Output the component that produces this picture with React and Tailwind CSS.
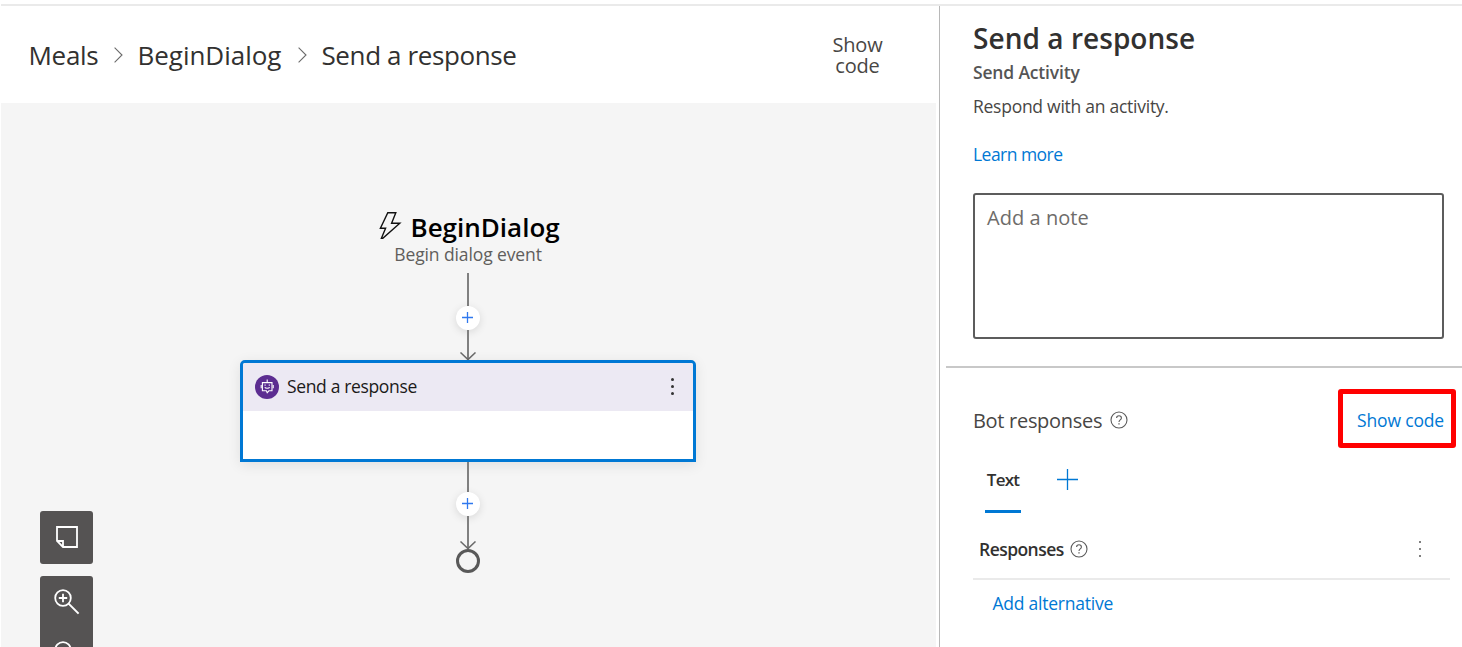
import React from "react";

function Chevron() {
  return (
    <svg width="9" height="16" viewBox="0 0 9 16" fill="none" stroke="#6b6b6b" strokeWidth="1.1" className="shrink-0">
      <path d="M0.6 0.6 8 8 0.6 15.4" />
    </svg>
  );
}

function HelpIcon() {
  return (
    <svg width="18" height="18" viewBox="0 0 18 18" fill="none" stroke="#5a5a5a" strokeWidth="1.1" className="shrink-0">
      <circle cx="9" cy="9" r="8" />
      <path d="M6.6 7.1C6.6 5.6 7.6 4.8 9 4.8c1.4 0 2.4.8 2.4 2.1 0 1.9-2.4 2-2.4 4" />
      <path d="M9 12.3v1.3" strokeWidth="1.3" />
    </svg>
  );
}

function Bolt() {
  return (
    <svg width="24" height="30" viewBox="0 0 24 30" fill="none" stroke="#111" strokeWidth="1.4" className="shrink-0">
      <path d="M9.8 0.7H17.8L13.6 11.2H21.8L4.8 26.3H3.4L7.6 16.2H2.4Z" />
    </svg>
  );
}

function PlusNode() {
  return (
    <div className="flex size-6 shrink-0 items-center justify-center rounded-full bg-white shadow-[0_2px_8px_rgba(0,0,0,0.12)]">
      <svg width="12" height="12" viewBox="0 0 12 12" fill="none" stroke="#2f78ee" strokeWidth="1.3">
        <path d="M0 5.5H11M5.5 0V11" />
      </svg>
    </div>
  );
}

function ArrowHead() {
  return (
    <svg width="18" height="8" viewBox="0 0 18 8" fill="none" stroke="#6a6a6a" strokeWidth="1.5" className="-mt-2 shrink-0">
      <path d="M1.5 0.5 9 7.6 16.5 0.5" />
    </svg>
  );
}

function BotIcon() {
  return (
    <div className="flex size-6 shrink-0 items-center justify-center rounded-full bg-[#5c2d91]">
      <svg width="16" height="18" viewBox="0 0 16 18" fill="none" stroke="#fff" strokeWidth="1.1">
        <path d="M8.2 1.6V4.6" />
        <path d="M3.4 4.6H13V12.8H9.9L8.2 14.8 7.4 12.8H3.4Z" />
        <path d="M2.2 7V10.2M14.2 7V10.2" />
        <path d="M5.8 9.2c.6 1.4 4.2 1.4 4.8 0" />
        <path d="M6.1 6.6v1.2M10.3 6.6v1.2" />
      </svg>
    </div>
  );
}

function Dots({ size, gap, color }) {
  return (
    <div className={"flex flex-col " + gap}>
      {[0, 1, 2].map((i) => (
        <span key={i} className={"rounded-full " + size + " " + color} />
      ))}
    </div>
  );
}

function Magnifier({ plus }) {
  return (
    <svg width="26" height="26" viewBox="0 0 26 26" fill="none" stroke="#fff" strokeWidth="1.8" className="shrink-0">
      <circle cx="9" cy="9" r="7.8" />
      <path d="M14.6 14.6 24.6 24.6" strokeWidth="2" />
      <path d={plus ? "M4.8 9H13.2M9 4.8V13.2" : "M4.8 9H13.2"} />
    </svg>
  );
}

function Toolbar() {
  return (
    <div className="absolute top-[408px] left-[39px] flex w-[53px] flex-col gap-3">
      <div className="flex h-[53px] items-center justify-center rounded-[3px] bg-[#555353] pb-px">
        <svg width="24" height="24" viewBox="0 0 24 24" fill="none" stroke="#fff" strokeWidth="1.8">
          <path d="M2 2H22V22H8L2 16ZM2.2 16H8V22" />
        </svg>
      </div>
      <div className="flex h-[106px] flex-col items-center gap-[26px] rounded-[3px] bg-[#555353] pt-[13px]">
        <Magnifier plus />
        <Magnifier />
      </div>
    </div>
  );
}

function Breadcrumb() {
  return (
    <nav className="flex items-center text-[26px] leading-[32px] whitespace-nowrap text-[#323130]">
      <span className="w-[85.5px] tracking-[-0.3px]">Meals</span>
      <Chevron />
      <span className="ml-[14.5px] w-[160.5px] tracking-[-0.03px]">BeginDialog</span>
      <Chevron />
      <span className="ml-[14.5px] tracking-[-0.39px]">Send a response</span>
    </nav>
  );
}

function Canvas() {
  return (
    <div className="relative flex flex-1 flex-col items-center overflow-hidden bg-[#f5f5f5] pt-[109px] pr-px">
      <div className="flex h-[30px] w-[180px] items-start gap-[8.5px] text-[26px] leading-[30px] font-semibold whitespace-nowrap text-black">
        <Bolt />
        <span>BeginDialog</span>
      </div>
      <div className="h-[31px] text-[17.5px] leading-[24px] tracking-[-0.11px] whitespace-nowrap text-[#605e5c]">Begin dialog event</div>

      <div className="h-[33px] w-[2px] bg-[#808080]" />
      <PlusNode />
      <div className="h-[30px] w-[2px] bg-[#808080]" />
      <ArrowHead />

      <div className="flex h-[102px] w-[456px] shrink-0 flex-col rounded-t-[5px] border-[3px] border-[#0078d4] bg-white shadow-[0_3px_14px_rgba(0,0,0,0.09)]">
        <div className="flex h-12 items-center rounded-t-[2px] bg-[#ece9f3] pr-[19px] pl-3">
          <BotIcon />
          <span className="ml-[8px] flex-1 pb-[2px] text-[17.5px] leading-[24px] tracking-[-0.35px] whitespace-nowrap text-[#1b1a19]">Send a response</span>
          <div className="pb-px">
            <Dots size="size-[3px]" gap="gap-[4px]" color="bg-[#333]" />
          </div>
        </div>
      </div>

      <div className="h-[30px] w-[2px] bg-[#808080]" />
      <PlusNode />
      <div className="h-[33px] w-[2px] bg-[#808080]" />
      <ArrowHead />
      <div className="size-6 shrink-0 rounded-full border-[3px] border-[#595959]" />

      <Toolbar />
    </div>
  );
}

function PropertyPanel() {
  return (
    <aside className="flex w-[523px] flex-col border-l border-[#b8b8b8] whitespace-nowrap text-[#323130]">
      <div className="flex flex-col pt-4 pr-[18px] pl-[33px]">
        <h1 className="text-[28px] leading-[32px] font-semibold tracking-[0.05px]">Send a response</h1>
        <h2 className="mt-[6px] text-[17.5px] leading-[24px] font-semibold tracking-[-0.17px] text-[#555]">Send Activity</h2>
        <p className="mt-[10px] text-[17.5px] leading-[24px] tracking-[-0.26px] text-[#484644]">Respond with an activity.</p>
        <a className="mt-[24px] text-[17.5px] leading-[24px] tracking-[-0.53px] text-[#0078d4]">Learn more</a>
        <div className="mt-[27px] h-[146px] rounded-[3px] border-2 border-[#5c5c5c] pt-[11px] pl-[12px] text-[20px] leading-[24px] tracking-[0.05px] text-[#6e6c6a]">Add a note</div>
      </div>
      <div className="mt-[27px] ml-[6px] h-[2px] bg-[#c8c8c8]" />
      <div className="mt-[21px] flex h-[59px] items-center pr-[6px] pl-[33px]">
        <span className="w-[136.5px] pt-[4px] text-[20px] leading-[24px] tracking-[-0.3px] text-[#484644]">Bot responses</span>
        <span className="flex flex-1 pt-[3px]">
          <HelpIcon />
        </span>
        <div className="flex h-[59px] w-[118px] items-center justify-end rounded-[3px] border-5 border-[#ff0000] pt-[3px] pr-[7px]">
          <a className="text-[17.5px] leading-[24px] tracking-[-0.17px] text-[#0078d4]">Show code</a>
        </div>
      </div>
      <div className="mt-[20px] flex pl-[45px]">
        <div className="flex h-[45px] w-[36px] flex-col items-center border-b-3 border-[#0078d4]">
          <span className="text-[17px] leading-[24px] font-semibold tracking-[-0.8px]">Text</span>
        </div>
        <svg width="22" height="22" viewBox="0 0 22 22" fill="none" stroke="#0078d4" strokeWidth="1.3" className="mt-px ml-[36px]">
          <path d="M0 10.5H21M10.5 0V21" />
        </svg>
      </div>
      <div className="mt-[24px] mr-[12px] ml-[33px] flex h-[43px] items-start border-b-2 border-[#eaeaea] pr-[29px] pl-[6px]">
        <span className="w-[91px] text-[17.5px] leading-[24px] font-semibold tracking-[-0.55px]">Responses</span>
        <span className="flex-1 pt-[3px]">
          <HelpIcon />
        </span>
        <div className="pt-[4px]">
          <Dots size="size-[2px]" gap="gap-[5px]" color="bg-[#555]" />
        </div>
      </div>
      <a className="mt-[11px] pl-[52.5px] text-[17.5px] leading-[24px] tracking-[-0.24px] text-[#0078d4]">Add alternative</a>
    </aside>
  );
}

export default function App() {
  return (
    <div className="flex h-[647px] w-[1462px] flex-col overflow-hidden bg-white pt-1 pl-px font-['Open_Sans',sans-serif]">
      <div className="h-[2px] shrink-0 bg-[#eaeaea]" />
      <div className="flex min-h-0 flex-1">
        <main className="mr-[3px] flex w-[935px] flex-col">
          <header className="flex h-[97px] shrink-0 items-center justify-between pr-[52.5px] pl-[27.5px]">
            <Breadcrumb />
            <button className="w-[52px] text-center text-[20px] leading-[21px] tracking-[-0.2px] text-[#484644]">Show code</button>
          </header>
          <Canvas />
        </main>
        <PropertyPanel />
      </div>
    </div>
  );
}
